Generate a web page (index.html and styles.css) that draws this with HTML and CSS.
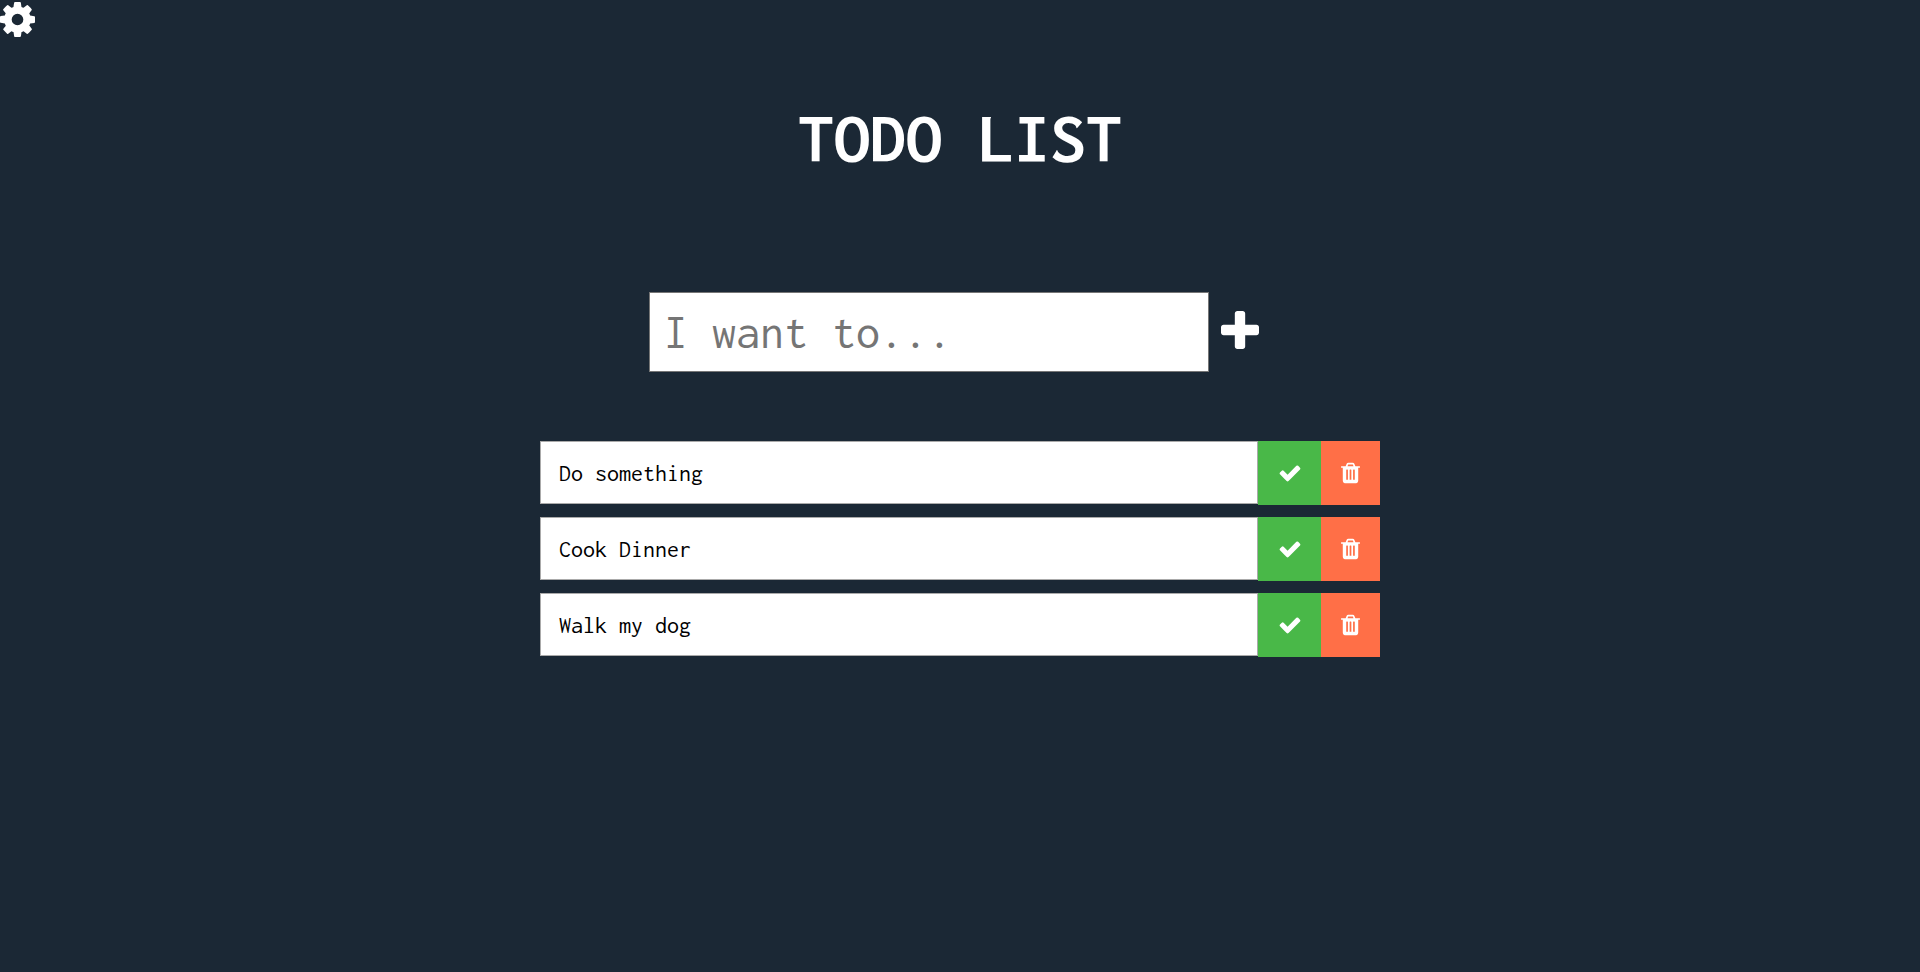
FILE: index.html
```html
<!DOCTYPE html>
<html lang="en">
<head>
<meta charset="utf-8">
<meta name="viewport" content="width=device-width, initial-scale=1">
<title>Todo List</title>
<link rel="stylesheet" href="styles.css">
</head>
<body>
<svg class="sprite" aria-hidden="true">
  <symbol id="cog" viewBox="128 128 1536 1536"><path d="M1152 896q0-106-75-181t-181-75-181 75-75 181 75 181 181 75 181-75 75-181zm512-109v222q0 12-8 23t-20 13l-185 28q-19 54-39 91 35 50 107 138 10 12 10 25t-9 23q-27 37-99 108t-94 71q-12 0-26-9l-138-108q-44 23-91 38-16 136-29 186-7 28-36 28h-222q-14 0-24.500-8.500t-11.500-21.500l-28-184q-49-16-90-37l-141 107q-10 9-25 9-14 0-25-11-126-114-165-168-7-10-7-23 0-12 8-23 15-21 51-66.500t54-70.500q-27-50-41-99l-183-27q-13-2-21-12.500t-8-23.500v-222q0-12 8-23t19-13l186-28q14-46 39-92-40-57-107-138-10-12-10-24 0-10 9-23 26-36 98.500-107.500t94.500-71.500q13 0 26 10l138 107q44-23 91-38 16-136 29-186 7-28 36-28h222q14 0 24.500 8.500t11.500 21.500l28 184q49 16 90 37l142-107q9-9 24-9 13 0 25 10 129 119 165 170 7 8 7 22 0 12-8 23-15 21-51 66.500t-54 70.500q26 50 41 98l183 28q13 2 21 12.500t8 23.500z"/></symbol>
  <symbol id="plus" viewBox="192 128 1408 1408"><path d="M1600 736v192q0 40-28 68t-68 28h-416v416q0 40-28 68t-68 28h-192q-40 0-68-28t-28-68v-416h-416q-40 0-68-28t-28-68v-192q0-40 28-68t68-28h416v-416q0-40 28-68t68-28h192q40 0 68 28t28 68v416h416q40 0 68 28t28 68z"/></symbol>
  <symbol id="check" viewBox="0 0 1792 1792"><path d="M1671 566q0 40-28 68l-724 724-136 136q-28 28-68 28t-68-28l-136-136-362-362q-28-28-28-68t28-68l136-136q28-28 68-28t68 28l294 295 656-657q28-28 68-28t68 28l136 136q28 28 28 68z"/></symbol>
  <symbol id="trash" viewBox="192 0 1408 1792"><path d="M704 1376v-704q0-14-9-23t-23-9h-64q-14 0-23 9t-9 23v704q0 14 9 23t23 9h64q14 0 23-9t9-23zm256 0v-704q0-14-9-23t-23-9h-64q-14 0-23 9t-9 23v704q0 14 9 23t23 9h64q14 0 23-9t9-23zm256 0v-704q0-14-9-23t-23-9h-64q-14 0-23 9t-9 23v704q0 14 9 23t23 9h64q14 0 23-9t9-23zm-544-992h448l-48-117q-7-9-17-11h-317q-10 2-17 11zm928 32v64q0 14-9 23t-23 9h-96v948q0 83-47 143.500t-113 60.500h-832q-66 0-113-58.500t-47-141.500v-952h-96q-14 0-23-9t-9-23v-64q0-14 9-23t23-9h309l70-167q15-37 54-63t79-26h320q40 0 79 26t54 63l70 167h309q14 0 23 9t9 23z"/></symbol>
</svg>
<header class="toolbar">
  <button class="icon-button" type="button" aria-label="Settings"><svg class="icon-cog"><use href="#cog"/></svg></button>
</header>
<main class="page">
  <h1 class="title">TODO LIST</h1>
  <form class="entry">
    <input class="entry-input" type="text" placeholder="I want to..." aria-label="New task">
    <button class="icon-button entry-add" type="button" aria-label="Add"><svg class="icon-plus"><use href="#plus"/></svg></button>
  </form>
  <ul class="todos">
    <li class="todo">
      <span class="todo-text">Do something</span>
      <button class="todo-button done" type="button" aria-label="Complete"><svg class="icon-check"><use href="#check"/></svg></button>
      <button class="todo-button remove" type="button" aria-label="Delete"><svg class="icon-trash"><use href="#trash"/></svg></button>
    </li>
    <li class="todo">
      <span class="todo-text">Cook Dinner</span>
      <button class="todo-button done" type="button" aria-label="Complete"><svg class="icon-check"><use href="#check"/></svg></button>
      <button class="todo-button remove" type="button" aria-label="Delete"><svg class="icon-trash"><use href="#trash"/></svg></button>
    </li>
    <li class="todo">
      <span class="todo-text">Walk my dog</span>
      <button class="todo-button done" type="button" aria-label="Complete"><svg class="icon-check"><use href="#check"/></svg></button>
      <button class="todo-button remove" type="button" aria-label="Delete"><svg class="icon-trash"><use href="#trash"/></svg></button>
    </li>
  </ul>
</main>
</body>
</html>
```
FILE: styles.css
```css
* {
  box-sizing: border-box;
}

body {
  margin: 0;
  min-height: 100vh;
  background: #1b2835;
  color: #fff;
  font-family: Inconsolata, "Noto Sans Mono CJK SC", "DejaVu Sans Mono", monospace;
}

.sprite {
  display: none;
}

svg {
  display: block;
  fill: currentColor;
}

.toolbar {
  display: flex;
  padding-top: 2px;
}

.icon-button {
  padding: 0;
  border: 0;
  background: none;
  color: inherit;
  cursor: pointer;
}

.icon-cog {
  width: 35px;
  height: 35px;
}

.page {
  display: flex;
  flex-direction: column;
  align-items: center;
  padding: 63px 16px 0;
}

.title {
  margin: 0;
  font-size: 72px;
  line-height: 76px;
  font-weight: 700;
}

.entry {
  display: flex;
  align-items: center;
  width: 100%;
  max-width: 622px;
  margin-top: 116px;
}

.entry-input {
  flex: 1;
  min-width: 0;
  height: 80px;
  padding: 0 14px;
  border: 1px solid #767676;
  border-radius: 0;
  background: #fff;
  color: #000;
  font: inherit;
  font-size: 48px;
}

.entry-input::placeholder {
  color: #757575;
}

.entry-add {
  padding: 0 12px 4px;
}

.icon-plus {
  width: 38px;
  height: 38px;
}

.todos {
  display: flex;
  flex-direction: column;
  gap: 12px;
  width: 100%;
  max-width: 840px;
  margin: 69px 0 0;
  padding: 0;
  list-style: none;
}

.todo {
  display: flex;
  align-items: stretch;
}

.todo-text {
  flex: 1;
  min-width: 0;
  margin-bottom: 1px;
  padding: 15px 18px 14px;
  border: 1px solid #aaa;
  background: #fff;
  color: #000;
  font-size: 24px;
  line-height: 32px;
}

.todo-button {
  display: flex;
  align-items: center;
  padding: 0 20px;
  border: 0;
  color: #fff;
  cursor: pointer;
}

.done {
  padding-right: 19px;
  background: #49b848;
}

.remove {
  background: #ff6f47;
}

.icon-check {
  width: 24px;
  height: 24px;
}

.icon-trash {
  width: 19px;
  height: 24px;
}
```
